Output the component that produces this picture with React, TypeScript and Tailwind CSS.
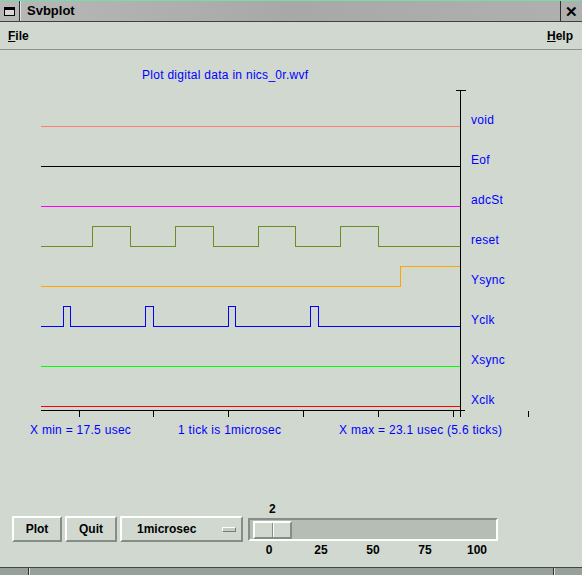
import React from "react";

const font = { fontFamily: '"Liberation Sans", Arial, sans-serif' };

const signals = [
  { name: "void", y: 126, color: "#fa8072", d: "M40 126 H460" },
  { name: "Eof", y: 166, color: "#000000", d: "M40 166 H460" },
  { name: "adcSt", y: 206, color: "#ff00ff", d: "M40 206 H460" },
  {
    name: "reset",
    y: 246,
    color: "#6b8e23",
    d: "M40 246 H92 V226 H130 V246 H175 V226 H213 V246 H258 V226 H295 V246 H340 V226 H378 V246 H460",
  },
  { name: "Ysync", y: 286, color: "#ffa500", d: "M40 286 H400 V266 H460" },
  {
    name: "Yclk",
    y: 326,
    color: "#0000ff",
    d: "M40 326 H63 V306 H70 V326 H145 V306 H153 V326 H228 V306 H235 V326 H310 V306 H318 V326 H460",
  },
  { name: "Xsync", y: 366, color: "#00ff00", d: "M40 366 H460" },
  { name: "Xclk", y: 406, color: "#ff0000", d: "M40 406 H460" },
];

const ticks = [79, 153, 228, 303, 378, 453, 528];

function Plot() {
  return (
    <svg width={582} height={390} viewBox="0 50 582 390" className="block" style={font}>
      <g transform="translate(0.5 0.5)" shapeRendering="crispEdges" fill="none">
        {signals.map((s) => (
          <path key={s.name} d={s.d} stroke={s.color} strokeWidth={1} />
        ))}
        {/* axes */}
        <path d="M460 90 V410" stroke="#000" strokeWidth={1.5} />
        <path d="M455 90 H465" stroke="#000" strokeWidth={1} />
        <path d="M40 410 H464" stroke="#000" strokeWidth={1.5} />
        {ticks.map((x) => (
          <path key={x} d={`M${x} 410 V416`} stroke="#000" strokeWidth={1} />
        ))}
        <path d="M460 410 V416" stroke="#000" strokeWidth={1} />
      </g>
      <g fill="#0000ff" fontSize={12} letterSpacing={0.28}>
        <text x={142} y={79}>Plot digital data in nics_0r.wvf</text>
        {signals.map((s) => (
          <text key={s.name} x={471} y={s.y - 2}>
            {s.name}
          </text>
        ))}
        <text x={30} y={434}>X min = 17.5 usec</text>
        <text x={178} y={434}>1 tick is 1microsec</text>
        <text x={339} y={434}>X max = 23.1 usec (5.6 ticks)</text>
      </g>
    </svg>
  );
}

const raised = "border-2 border-t-white border-l-white border-r-[#868c86] border-b-[#868c86]";

export default function App() {
  return (
    <div className="w-[582px] h-[575px] bg-[#d0d8d0] overflow-hidden flex flex-col" style={font}>
      {/* title bar */}
      <div className="h-[22px] flex border-t border-t-[#70e0a8] border-b border-b-[#404040] bg-gradient-to-r from-[#b8b8b8] via-[#a8a8a8] to-[#b0b0b0]">
        <div className="w-[20px] flex items-center justify-center border-r border-r-[#303030]">
          <div className="w-[11px] h-[9px] border border-black border-t-[3px] bg-[#d8d8d8]" />
        </div>
        <div className="w-px bg-white/60" />
        <div className="flex-1 flex items-center pl-[6px] text-[13px] font-bold text-black">Svbplot</div>
        <div className="w-px bg-[#303030]" />
        <div className="w-[21px] flex items-center justify-center text-[15px] font-bold text-black leading-none">
          ✕
        </div>
      </div>

      {/* menu bar */}
      <div className="h-[28px] flex items-center justify-between px-[8px] border-b border-b-[#8c948c] text-[12px] font-bold text-black">
        <span>
          <span className="underline">F</span>ile
        </span>
        <span className="mr-[1px]">
          <span className="underline">H</span>elp
        </span>
      </div>

      <Plot />

      {/* controls */}
      <div className="flex-1 flex items-start pl-[12px] pt-[62px] text-[12px] font-bold text-black">
        <button className={`mt-[14px] w-[50px] h-[26px] ${raised} bg-[#d0d8d0] flex items-center justify-center`}>
          Plot
        </button>
        <button className={`mt-[14px] ml-[3px] w-[52px] h-[26px] ${raised} bg-[#d0d8d0] flex items-center justify-center`}>
          Quit
        </button>
        <div className={`mt-[14px] ml-[3px] w-[123px] h-[26px] ${raised} flex items-center pl-[15px] pr-[5px]`}>
          <span className="flex-1">1microsec</span>
          <span className="w-[14px] h-[5px] border border-t-white border-l-white border-r-[#767c76] border-b-[#767c76] bg-[#c4ccc4]" />
        </div>
        <div className="ml-[5px] w-[250px] flex flex-col">
          <div className="h-[14px] leading-[14px] pl-[21px]">2</div>
          <div className="mt-[2px] h-[23px] border-2 border-t-[#868c86] border-l-[#868c86] border-r-white border-b-white bg-[#b6bdb5] pl-[3px] pt-px">
            <div className="w-[39px] h-[18px] flex border-2 border-t-white border-l-white border-r-[#868c86] border-b-[#868c86] bg-[#d0d8d0]">
              <div className="w-[17px]" />
              <div className="w-px bg-[#868c86]" />
              <div className="w-px bg-white" />
            </div>
          </div>
          <div className="mt-[2px] h-[14px] leading-[14px] flex gap-[12px] pl-px">
            {["0", "25", "50", "75", "100"].map((v) => (
              <span key={v} className="w-[40px] text-center">
                {v}
              </span>
            ))}
          </div>
        </div>
      </div>

      {/* bottom frame */}
      <div className="h-[8px] flex border-t border-t-[#3c4a44] bg-[#98a09c]">
        <div className="w-[28px]" />
        <div className="w-px bg-[#303030]" />
        <div className="w-px bg-white/70" />
        <div className="flex-1" />
        <div className="w-px bg-[#303030]" />
        <div className="w-px bg-white/70" />
        <div className="w-[27px]" />
      </div>
    </div>
  );
}
